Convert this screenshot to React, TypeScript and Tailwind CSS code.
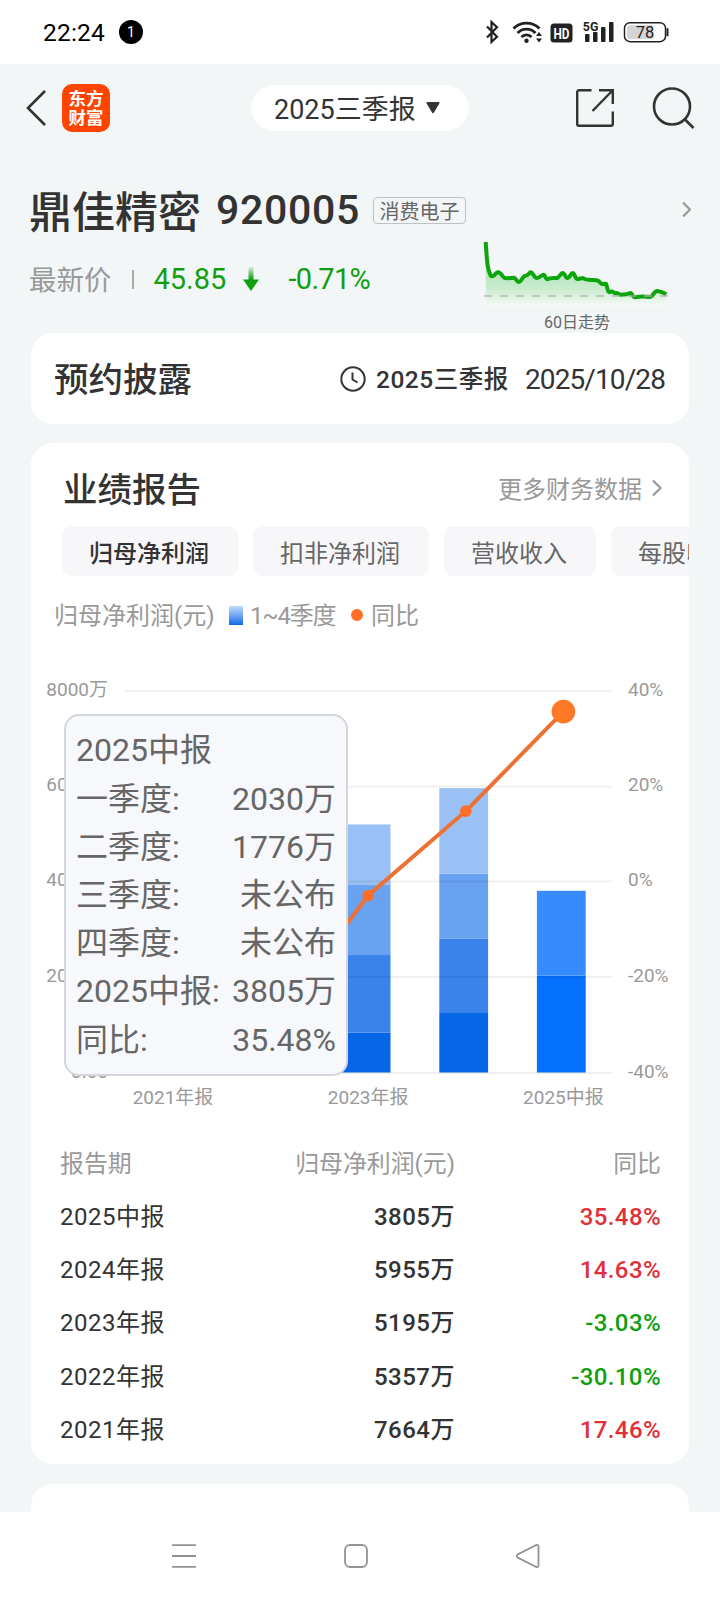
import { ReactNode } from 'react'

interface Period {
  name: string
  quarters: number[]
  total: string
  yoy: number
}

// oldest first, quarter values in 万
const periods: Period[] = [
  { name: '2021年报', quarters: [], total: '7664万', yoy: 17.46 },
  { name: '2022年报', quarters: [1210, 1480, 1320, 1347], total: '5357万', yoy: -30.1 },
  { name: '2023年报', quarters: [833, 1627, 1466, 1269], total: '5195万', yoy: -3.03 },
  { name: '2024年报', quarters: [1246, 1556, 1361, 1792], total: '5955万', yoy: 14.63 },
  { name: '2025中报', quarters: [2030, 1775], total: '3805万', yoy: 35.48 },
]

const tabs = ['归母净利润', '扣非净利润', '营收收入', '每股收益']

const tooltipRows = [
  ['一季度:', '2030万'],
  ['二季度:', '1776万'],
  ['三季度:', '未公布'],
  ['四季度:', '未公布'],
  ['2025中报:', '3805万'],
  ['同比:', '35.48%'],
]

const barColors = ['#0567e6', '#3983eb', '#69a2f0', '#9ac1f5']
const activeColors = ['#0670ff', '#388bff']

function StatusBar() {
  return (
    <div className="flex h-16 items-center bg-white pl-[43px] pr-[51px] text-black">
      <span className="w-[62px] pt-[2px] text-[24.500px] leading-none tracking-[0.200px]">22:24</span>
      <span className="ml-[14px] flex size-6 items-center justify-center rounded-full bg-black text-[14px] leading-none text-white">1</span>
      <svg className="ml-auto overflow-visible" width="186" height="24" viewBox="0 0 186 24" fill="none">
        <path d="M4 6.500l10 10.200-5.500 5.300V2l5.500 5.300L4 17.500" stroke="#222" strokeWidth="2.200" />
        <g stroke="#222" strokeWidth="2.800" fill="none">
          <path d="M30.500 8.500a18.500 18.500 0 0 1 26 0" />
          <path d="M34.500 13a12.500 12.500 0 0 1 18 0" />
          <path d="M38.500 17a7 7 0 0 1 10 0" />
        </g>
        <circle cx="43.500" cy="20.800" r="2.200" fill="#222" />
        <path d="M53 16l3-4 3 4zM53 18.500l3 4 3-4z" fill="#222" />
        <rect x="67.500" y="3.500" width="22" height="19" rx="3.500" fill="#222" />
        <text x="78.500" y="18.500" textAnchor="middle" fontSize="15" fontWeight="700" fill="#fff" textLength="16" lengthAdjust="spacingAndGlyphs">HD</text>
        <text x="99.800" y="11" fontSize="13.500" fontWeight="700" fill="#222" textLength="15.500" lengthAdjust="spacingAndGlyphs">5G</text>
        <g fill="#222">
          <rect x="102" y="14" width="4.500" height="8" rx="1" />
          <rect x="110" y="12" width="4.500" height="10" rx="1" />
          <rect x="118" y="7" width="4.500" height="15" rx="1" />
          <rect x="126" y="2" width="4.500" height="20" rx="1" />
        </g>
        <rect x="141.500" y="2.700" width="41" height="19" rx="5.500" stroke="#222" strokeWidth="1.500" />
        <path d="M147.500 5.200h23v14h-23a3.500 3.500 0 0 1-3.500-3.500v-7A3.500 3.500 0 0 1 147.500 5.200z" fill="#d5d5d5" />
        <path d="M184.500 8.200v8" stroke="#222" strokeWidth="2" />
        <text x="162" y="18" textAnchor="middle" fontSize="16.500" fill="#222">78</text>
      </svg>
    </div>
  )
}

function Header() {
  return (
    <header className="flex h-[88px] items-center pl-[26px] pr-[24px]">
      <svg width="20" height="38" viewBox="0 0 20 38" fill="none" stroke="#333" strokeWidth="2.600">
        <path d="M19 2L2 19l17 17" />
      </svg>
      <div className="ml-4 flex size-12 flex-col items-center justify-center rounded-[10px] bg-[#ff4400] pb-[2px] font-['Noto_Sans_CJK_SC',sans-serif] text-[17.500px] font-bold leading-[19.500px] text-white">
        <span>东方</span>
        <span>财富</span>
      </div>
      <button className="ml-[141px] flex h-[46px] w-[218px] items-center rounded-full bg-white pl-[23px] text-[27px] leading-none text-[#333]">
        <span className="pt-[4px]">2025三季报</span>
        <svg className="ml-[10px]" width="14" height="12" viewBox="0 0 14 12" fill="#333">
          <path d="M1.500 0h11a1 1 0 0 1 .8 1.500L8 10.500a1.200 1.200 0 0 1-2 0L.7 1.500A1 1 0 0 1 1.500 0z" />
        </svg>
      </button>
      <svg className="ml-auto" width="40" height="40" viewBox="0 0 40 40" fill="none" stroke="#333" strokeWidth="2.400">
        <path d="M16.500 2.200H4a1.800 1.800 0 0 0-1.800 1.800v32A1.800 1.800 0 0 0 4 37.800h32a1.800 1.800 0 0 0 1.800-1.800V23.500" />
        <path d="M24 2.200h13.800V16M37.500 2.500L17.500 23" />
      </svg>
      <svg className="ml-[37px]" width="44" height="44" viewBox="0 0 44 44" fill="none" stroke="#333" strokeWidth="2.600">
        <circle cx="20" cy="20.500" r="18" />
        <path d="M32.500 33l9 9" />
      </svg>
    </header>
  )
}

function Trend() {
  const line = 'M8 3L11 45Q14 85 20 96C24 112 33 106 38 98Q46 89 54 99Q62 112 70 112L93 110C99 111 101 123 107 123C116 123 118 104 128 104C136 104 138 94 143 94C150 94 153 111 162 111C170 111 176 101 181 101C188 101 186 115 194 115C200 110 212 112 222 111C229 109 233 96 239 96C246 96 246 111 253 111C260 111 264 96 269 96C276 96 275 113 284 114C292 115 295 111 300 111Q306 116 314 116L341 118C350 119 352 129 358 129L369 128C372 134 373 150 378 153C384 154 385 149 390 152Q395 158 402 156L412 161L430 160L443 156C448 157 448 168 455 169Q478 164 500 168C510 168 512 150 523 150Q536 152 550 160'
  return (
    <div className="flex w-[188px] flex-col items-center">
      <svg className="shrink-0" width="188" height="66" viewBox="0 0 564 198" fill="none">
        <defs>
          <linearGradient id="trend" x1="0" y1="0" x2="0" y2="1">
            <stop offset="0" stopColor="#12b71c" stopOpacity="0.350" />
            <stop offset="0.450" stopColor="#12b71c" stopOpacity="0.250" />
            <stop offset="1" stopColor="#fff" stopOpacity="0.500" />
          </linearGradient>
        </defs>
        <path d={line + 'V194H8Z'} fill="url(#trend)" />
        <path d={line} stroke="#0da50d" strokeWidth="12" strokeLinejoin="round" />
        <path d="M3 165H554" stroke="#aaaeac" strokeOpacity="0.850" strokeWidth="5" strokeDasharray="24 24" />
      </svg>
      <span className="mt-[6px] text-[16px] leading-[20px] text-[#666]">60日走势</span>
    </div>
  )
}

function StockInfo() {
  return (
    <section className="flex h-[181px] justify-between pl-[29px] pr-[29px]">
      <div className="pt-[32px]">
        <div className="flex h-[52px] items-center">
          <h1 className="pt-[6px] text-[43px] font-medium leading-none text-[#333]">鼎佳精密</h1>
          <span className="ml-[15px] w-[143px] pt-px text-[41px] font-medium leading-none tracking-[0.700px] text-[#333]">920005</span>
          <span className="ml-[14px] flex h-[27px] items-center rounded border border-[#bfc2c4] px-[5.500px] pt-[3px] text-[20px] leading-none text-[#666]">消费电子</span>
        </div>
        <div className="mt-[17px] flex h-[52px] items-center leading-none">
          <span className="pt-[3px] text-[27.500px] text-[#999]">最新价</span>
          <span className="ml-[20px] h-[19px] w-[2px] bg-[#aaa]" />
          <span className="ml-[20px] w-[74px] pt-px text-[29px] text-[#0f9f0f]">45.85</span>
          <svg className="ml-[15px]" width="16" height="24" viewBox="0 0 16 24">
            <defs>
              <linearGradient id="down" x1="0" y1="0" x2="0" y2="1">
                <stop offset="0" stopColor="#0f9f0f" stopOpacity="0.100" />
                <stop offset="0.500" stopColor="#0f9f0f" />
              </linearGradient>
            </defs>
            <path d="M5.500 0h5v12.500H16L8 24 0 12.500h5.500z" fill="url(#down)" />
          </svg>
          <span className="ml-[30px] pt-px text-[29px] tracking-[-0.700px] text-[#0f9f0f]">-0.71%</span>
        </div>
      </div>
      <div className="flex flex-col items-end pt-[49px]">
        <svg className="shrink-0" width="9" height="17" viewBox="0 0 9 17" fill="none" stroke="#999" strokeWidth="2.200">
          <path d="M1 1.500l7 7-7 7" />
        </svg>
        <div className="mr-[20px] mt-[23px] shrink-0">
          <Trend />
        </div>
      </div>
    </section>
  )
}

function Card({ className, children }: { className: string; children?: ReactNode }) {
  return <section className={`mx-[31px] rounded-[22px] bg-white ${className}`}>{children}</section>
}

function Disclosure() {
  return (
    <Card className="flex h-[91px] items-center pl-[23px] pr-[23px] text-[#333]">
      <h2 className="pt-[4px] text-[34.500px] font-medium leading-none">预约披露</h2>
      <svg className="ml-auto" width="26" height="26" viewBox="0 0 26 26" fill="none" stroke="#333" strokeWidth="2">
        <circle cx="13" cy="13" r="11.700" />
        <path d="M12.500 6.500V13.500L17.500 16.500" />
      </svg>
      <span className="ml-[10px] w-[134px] whitespace-nowrap pt-[3px] text-[24.500px] font-medium leading-none tracking-[0.500px]">2025三季报</span>
      <span className="ml-[15px] w-[141px] whitespace-nowrap pt-[2px] text-[28px] leading-none tracking-[-0.900px]">2025/10/28</span>
    </Card>
  )
}

function Chart() {
  const base = 436.5
  const unit = 382 / 8000
  const cx = (i: number) => 142 + i * 97.6
  const cy = (yoy: number) => 245 - yoy * 4.775
  const grid = [55, 150.5, 245.5, 341, 437]
  const leftLabels = ['8000万', '6000万', '4000万', '2000万', '0.00']
  const rightLabels = ['40%', '20%', '0%', '-20%', '-40%']

  return (
    <div className="relative h-[500px]">
      <svg width="658" height="500" viewBox="0 0 658 500" fontSize="19">
        {periods.map((p, i) => {
          const colors = i === periods.length - 1 ? activeColors : barColors
          let sum = 0
          return p.quarters.map((q, k) => {
            sum += q
            return <rect key={`${i}-${k}`} x={cx(i) - 26.5} y={base - sum * unit} width="48.800" height={q * unit} fill={colors[k]} />
          })
        })}
        {grid.map((y, i) => (
          <g key={y}>
            <path d={`M94 ${y}H581`} stroke="#000" strokeOpacity="0.060" strokeWidth="2" />
            <text x="77" y={y + 4.5} textAnchor="end" fill="#999">{leftLabels[i]}</text>
            <text x="597" y={y + 4.5} fill="#999">{rightLabels[i]}</text>
          </g>
        ))}
        <polyline points={periods.map((p, i) => `${cx(i)},${cy(p.yoy)}`).join(' ')} fill="none" stroke="#ed7133" strokeWidth="4" />
        {periods.map((p, i) => (
          <circle key={p.name} cx={cx(i)} cy={cy(p.yoy)} r={i === periods.length - 1 ? 11.8 : 5.8} fill={i === periods.length - 1 ? '#ff7826' : '#ff6e26'} />
        ))}
        {[0, 2, 4].map((i) => (
          <text key={i} x={cx(i)} y="468" textAnchor="middle" fill="#999">{periods[i].name}</text>
        ))}
      </svg>

      <div className="absolute left-[33px] top-[78px] h-[362px] w-[284px] rounded-[15px] border-2 border-[#d3d6dc] bg-[#f7f8fb] px-[10px] pt-[10.300px] text-[32px] leading-[48.200px] text-[#666]">
        <div>2025中报</div>
        {tooltipRows.map(([label, value]) => (
          <div key={label} className="flex justify-between whitespace-nowrap">
            <span>{label}</span>
            <span>{value}</span>
          </div>
        ))}
      </div>
    </div>
  )
}

function ReportTable() {
  return (
    <div className="pl-[29px] pr-[28px] text-[24px]">
      <div className="grid h-[54px] grid-cols-[195px_200px_1fr] items-center pt-[4px] text-[23.900px] text-[#999]">
        <span>报告期</span>
        <span className="text-right">归母净利润(元)</span>
        <span className="text-right">同比</span>
      </div>
      {[...periods].reverse().map((p) => (
        <div key={p.name} className="grid h-[53.300px] grid-cols-[195px_200px_1fr] items-center text-[#333]">
          <span className="tracking-[0.500px]">{p.name}</span>
          <span className="text-right font-medium tracking-[0.500px]">{p.total}</span>
          <span className={`text-right font-medium tracking-[0.400px] ${p.yoy < 0 ? 'text-[#0f9f0f]' : 'text-[#e0303a]'}`}>{p.yoy.toFixed(2)}%</span>
        </div>
      ))}
    </div>
  )
}

function Performance() {
  return (
    <Card className="mt-[19px] h-[1021px] overflow-hidden pt-[20px]">
      <div className="flex h-[50px] items-center pl-[32px] pr-[27px]">
        <h2 className="pt-[5px] text-[34.500px] font-medium leading-none text-[#333]">业绩报告</h2>
        <span className="ml-auto pt-[3px] text-[24px] leading-none text-[#999]">更多财务数据</span>
        <svg className="ml-[10px]" width="10" height="18" viewBox="0 0 10 18" fill="none" stroke="#999" strokeWidth="2.200">
          <path d="M1 1.500l7.500 7.500L1 16.500" />
        </svg>
      </div>

      <div className="mt-[13px] flex gap-[15px] pl-[31px]">
        {tabs.map((tab, i) => (
          <button
            key={tab}
            className={`h-[50px] shrink-0 rounded-[9px] bg-[#f7f7fa] pl-[27px] pr-[29px] pt-[5px] text-[24px] ${i === 0 ? 'font-medium text-[#333]' : 'text-[#666]'}`}
          >
            {tab}
          </button>
        ))}
      </div>

      <div className="mt-[18px] flex h-[42px] items-center whitespace-nowrap pl-[23px] text-[24px] leading-none text-[#999]">
        <span className="w-[160px] pt-[2px]">归母净利润(元)</span>
        <span className="ml-[15px] h-[19px] w-[14px] bg-gradient-to-b from-[#c3dcfa] to-[#0567e6]" />
        <span className="ml-[7px] w-[88px] pt-[2px] tracking-[-1.200px]">1~4季度</span>
        <span className="ml-[13px] size-3 rounded-full bg-[#ff7026]" />
        <span className="ml-[8px] pt-[2px]">同比</span>
      </div>

      <Chart />
      <ReportTable />
    </Card>
  )
}

function NavBar() {
  return (
    <nav className="flex h-[88px] items-center gap-[148px] bg-white pl-[172px]">
      <svg width="24" height="24" viewBox="0 0 24 24" stroke="#939393" strokeWidth="1.800">
        <path d="M0 1.200h24M0 12h24M0 22.800h24" />
      </svg>
      <svg width="24" height="24" viewBox="0 0 24 24" fill="none" stroke="#939393" strokeWidth="1.800">
        <rect x="1" y="1" width="22" height="22" rx="5" />
      </svg>
      <svg width="24" height="24" viewBox="0 0 24 24" fill="none" stroke="#939393" strokeWidth="1.800">
        <path d="M19.700 1.200L1.800 10.400a1.800 1.800 0 0 0 0 3.200L19.700 22.800A1.800 1.800 0 0 0 22.500 21.500V2.500A1.800 1.800 0 0 0 19.700 1.200z" />
      </svg>
    </nav>
  )
}

export default function App() {
  return (
    <div className="flex h-[1600px] w-[720px] flex-col overflow-hidden bg-[#f2f6f7] font-['Roboto','Noto_Sans_CJK_SC',sans-serif]">
      <StatusBar />
      <Header />
      <StockInfo />
      <Disclosure />
      <Performance />
      <div className="h-[48px] overflow-hidden pt-[20px]">
        <Card className="h-[60px]" />
      </div>
      <NavBar />
    </div>
  )
}
